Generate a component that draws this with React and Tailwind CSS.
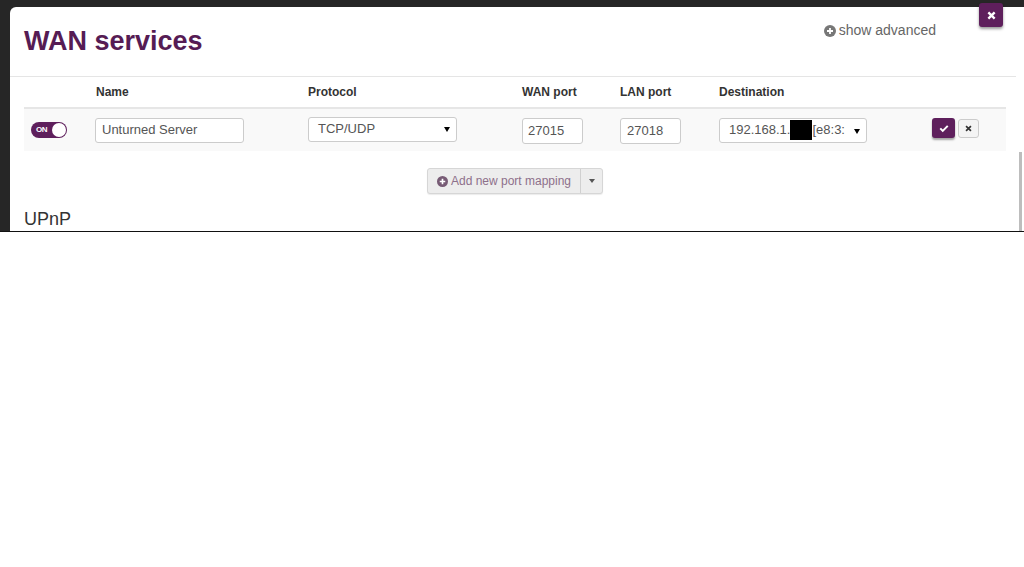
import React from 'react';

function PlusCircle({ className }) {
  return (
    <svg viewBox="0 0 16 16" className={className}>
      <circle cx="8" cy="8" r="8" fill="currentColor" />
      <path d="M8 4v8M4 8h8" stroke="#fff" strokeWidth="2.4" />
    </svg>
  );
}

function Caret() {
  return <span className="inline-block w-0 h-0 border-l-[3px] border-r-[3px] border-t-[5px] border-l-transparent border-r-transparent border-t-black" />;
}

export default function App() {
  return (
    <div className="w-[1024px] h-[567px] bg-white font-['Liberation_Sans',Arial,sans-serif] overflow-hidden">
      <div className="relative h-[232px] bg-[#262626] pl-[10px] pt-[7px] border-b border-[#111]">
        <div className="h-full bg-white rounded-tl-[6px] flex">
          <div className="flex-1 pl-[14px] pr-[10px]">
            <div className="h-[70px] border-b border-[#e5e5e5] -ml-[14px] pl-[14px] -mr-[10px] pr-[10px] flex items-start justify-between">
              <h1 className="text-[27px] leading-none font-bold text-[#561c54] mt-[21px]">WAN services</h1>
              <div className="flex items-center gap-[3px] text-[14px] text-[#666] mt-[13px] mr-[70px]">
                <PlusCircle className="w-[12px] h-[12px] text-[#777]" />
                <span>show advanced</span>
              </div>
            </div>

            <div className="grid grid-cols-[72px_213px_214px_98px_99px_213px_1fr] items-center text-[12px] font-bold text-[#333] h-[32px] border-b-2 border-[#e6e6e6] px-0">
              <div />
              <div>Name</div>
              <div className="-ml-[1px]">Protocol</div>
              <div className="-ml-[1px]">WAN port</div>
              <div className="-ml-[1px]">LAN port</div>
              <div className="-ml-[1px]">Destination</div>
              <div />
            </div>

            <div className="grid grid-cols-[72px_213px_214px_98px_99px_213px_1fr] items-center h-[42px] bg-[#f9f9f9] text-[13px] text-[#555]">
              <div className="pl-[7px]">
                <div className="w-[36px] h-[16px] rounded-full bg-[#5e1f5c] flex items-center justify-between pl-[5px] pr-[1px]">
                  <span className="text-[8px] font-bold text-white tracking-tighter">ON</span>
                  <span className="w-[14px] h-[14px] rounded-full bg-white" />
                </div>
              </div>
              <div className="-ml-[1px]">
                <div className="w-[149px] h-[25px] border border-[#ccc] rounded-[3px] bg-white flex items-center px-[6px]">Unturned Server</div>
              </div>
              <div className="-ml-[1px]">
                <div className="w-[149px] h-[25px] border border-[#ccc] rounded-[3px] bg-white flex items-center justify-between pl-[9px] pr-[6px] -mt-[2px]">
                  <span>TCP/UDP</span>
                  <Caret />
                </div>
              </div>
              <div className="-ml-[1px]">
                <div className="w-[61px] h-[26px] border border-[#ccc] rounded-[3px] bg-white flex items-center px-[5px] mt-[2px]">27015</div>
              </div>
              <div className="-ml-[1px]">
                <div className="w-[61px] h-[26px] border border-[#ccc] rounded-[3px] bg-white flex items-center px-[6px] mt-[2px]">27018</div>
              </div>
              <div className="-ml-[1px]">
                <div className="w-[148px] h-[25px] border border-[#ccc] rounded-[3px] bg-white flex items-center pl-[9px] pr-[6px]">
                  <span>192.168.1.</span>
                  <span className="w-[22px] h-[20px] bg-black" />
                  <span className="flex-1 overflow-hidden whitespace-nowrap">[e8:3:</span>
                  <span className="ml-[8px]"><Caret /></span>
                </div>
              </div>
              <div className="flex items-center gap-[3px] -ml-[1px] -mt-[4px]">
                <div className="w-[23px] h-[20px] rounded-[3px] bg-[#5e1f5c] shadow-[0_2px_2px_rgba(0,0,0,0.35)] flex items-center justify-center">
                  <svg viewBox="0 0 12 12" className="w-[10px] h-[10px]"><path d="M1.5 6.5l3 3 6-6" stroke="#fff" strokeWidth="2.4" fill="none" /></svg>
                </div>
                <div className="w-[21px] h-[19px] rounded-[3px] bg-[#f4f4f4] border border-[#ccc] flex items-center justify-center">
                  <svg viewBox="0 0 10 10" className="w-[7px] h-[7px]"><path d="M1.5 1.5l7 7M8.5 1.5l-7 7" stroke="#333" strokeWidth="2.4" /></svg>
                </div>
              </div>
            </div>

            <div className="flex justify-center pt-[17px]">
              <div className="flex h-[26px] border border-[#d6d6d6] rounded-[3px] bg-[#ededed] shadow-[0_1px_1px_rgba(0,0,0,0.08)] text-[12px] text-[#8d708b]">
                <div className="flex items-center gap-[3px] pl-[9px] pr-[9px] border-r border-[#d0d0d0]">
                  <PlusCircle className="w-[11px] h-[11px] text-[#775b75]" />
                  <span>Add new port mapping</span>
                </div>
                <div className="w-[21px] flex items-center justify-center">
                  <span className="inline-block w-0 h-0 border-l-[3px] border-r-[3px] border-t-[4px] border-l-transparent border-r-transparent border-t-[#555]" />
                </div>
              </div>
            </div>

            <div className="text-[18px] text-[#333] mt-[12px]">UPnP</div>
          </div>
          <div className="w-[8px] pt-[145px] flex justify-center">
            <div className="w-[3px] h-full bg-[#bdbdbd]" />
          </div>
        </div>

        <div className="absolute left-[979px] top-[3px] w-[24px] h-[24px] rounded-[3px] bg-[#5e1f5c] shadow-[0_2px_3px_rgba(0,0,0,0.4)] flex items-center justify-center">
          <svg viewBox="0 0 10 10" className="w-[9px] h-[9px]"><path d="M1.5 1.5l7 7M8.5 1.5l-7 7" stroke="#fff" strokeWidth="2.6" /></svg>
        </div>
      </div>
    </div>
  );
}
